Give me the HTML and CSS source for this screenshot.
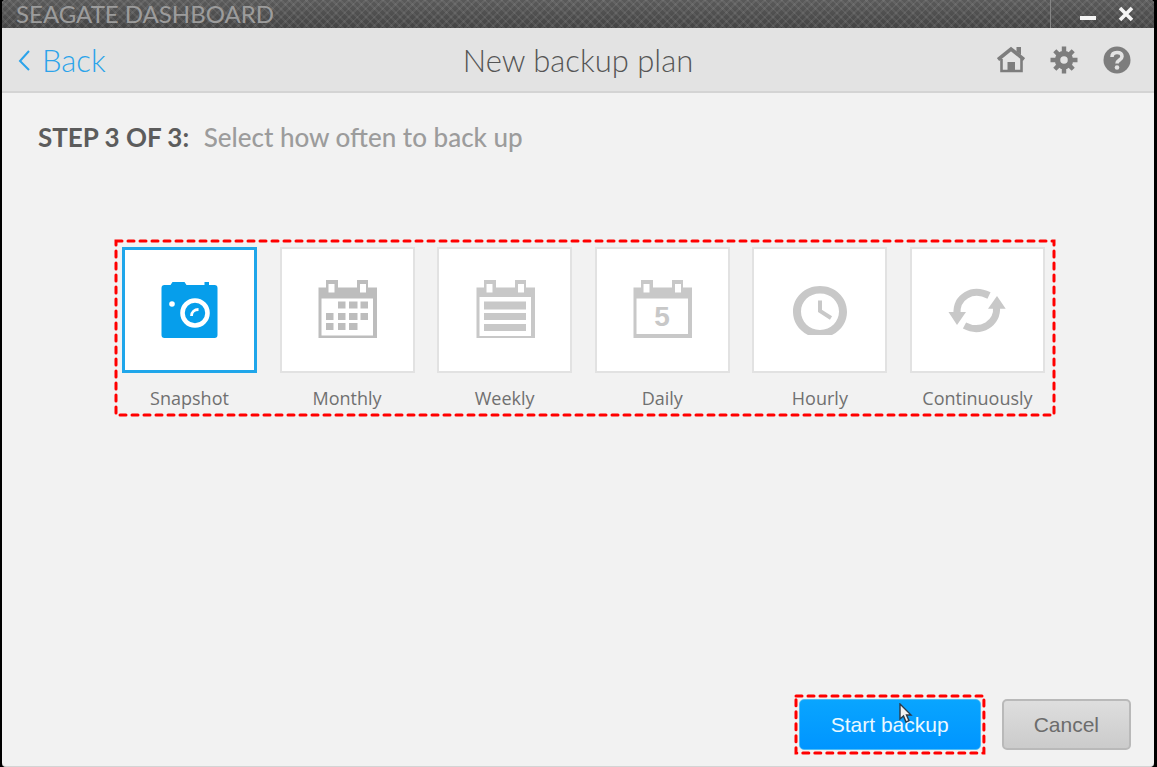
FILE: index.html
```
<!DOCTYPE html>
<html lang="en">
<head>
    <meta charset="UTF-8">
    <meta name="viewport" content="width=device-width, initial-scale=1.0">
    <title>Seagate Dashboard</title>
    <link rel="stylesheet" href="styles.css">
</head>
<body>
    <div class="window">
        <div class="titlebar">
            <span class="app-name">SEAGATE DASHBOARD</span>
            <div class="window-buttons">
                <button type="button" aria-label="Minimize">
                    <svg width="16" height="16" viewBox="0 0 16 16"><path d="M0 10h16v4H0z" fill="#f4f4f4"/></svg>
                </button>
                <button type="button" aria-label="Close">
                    <svg width="16" height="16" viewBox="0 0 16 16"><path d="M2 2l12 12M14 2L2 14" stroke="#f4f4f4" stroke-width="3.600"/></svg>
                </button>
            </div>
        </div>

        <header class="header">
            <a class="back" href="#">
                <svg width="14" height="22" viewBox="0 0 14 22"><path d="M12 2L3 12l9 9" fill="none" stroke="#2ba3ea" stroke-width="2"/></svg>
                Back
            </a>
            <h1>New backup plan</h1>
            <nav class="tools">
                <a href="#" aria-label="Home">
                    <svg width="28" height="28" viewBox="0 0 28 28">
                        <path d="M4.500 13v12h20V13" fill="none" stroke="#7d7d7d" stroke-width="2.600"/>
                        <path d="M1 13.500L14 3l13 10.500" fill="none" stroke="#7d7d7d" stroke-width="3.600"/>
                        <path d="M19.500 1H24v8l-4.500-3.500z" fill="#7d7d7d"/>
                        <path d="M10.500 16h7.500v9h-7.500z" fill="#7d7d7d"/>
                    </svg>
                </a>
                <a href="#" aria-label="Settings">
                    <svg width="28" height="28" viewBox="-14 -14 28 28">
                        <circle r="6.500" fill="none" stroke="#7d7d7d" stroke-width="5.500"/>
                        <g stroke="#7d7d7d" stroke-width="4.400">
                            <path d="M0-13.500V-8M0 13.500V8M-13.500 0H-8M13.500 0H8"/>
                            <path d="M0-13V-8M0 13V8M-13 0H-8M13 0H8" transform="rotate(45)"/>
                        </g>
                    </svg>
                </a>
                <a href="#" aria-label="Help">
                    <svg width="28" height="28" viewBox="0 0 28 28">
                        <circle cx="14" cy="14" r="13.500" fill="#7d7d7d"/>
                        <path d="M9 11C9 8 11 6.500 14 6.500s5 1.400 5 4c0 3.600-5 3.400-5 7" fill="none" stroke="#e3e3e3" stroke-width="3.600"/>
                        <circle cx="14" cy="21.500" r="2.300" fill="#e3e3e3"/>
                    </svg>
                </a>
            </nav>
        </header>

        <main class="content">
            <h2 class="step"><strong>STEP 3 OF 3:</strong> <span>Select how often to back up</span></h2>

            <div class="choices">
                <svg class="marker"><rect width="100%" height="100%"/></svg>

                <label class="choice">
                    <input type="radio" name="frequency" checked>
                    <span class="tile">
                        <svg class="icon blue" viewBox="0 0 60 60">
                            <path d="M4.500 5h6l2-3h12l2 3h18V2h4.500v3h5.500q3 0 3 3v47q0 3-3 3h-50q-3 0-3-3V8q0-3 3-3z"/>
                            <circle cx="12" cy="24" r="2.800" fill="#fff"/>
                            <circle cx="35" cy="33" r="12.500" fill="none" stroke="#fff" stroke-width="4.600"/>
                            <path d="M31.500 36c0-4 3-6.500 7-6.500" fill="none" stroke="#fff" stroke-width="2.800"/>
                        </svg>
                    </span>
                    Snapshot
                </label>

                <label class="choice">
                    <input type="radio" name="frequency">
                    <span class="tile">
                        <svg class="icon dark" viewBox="0 0 60 60">
                            <path fill-rule="evenodd" d="M1.500 7.500H9V0h12v7.500h19V0h11v7.500h9V58H1.500zM4.500 18.500v37H56v-37zM11.500 4v8.500h6V4zM43 4v8.500h6V4z"/>
                            <path d="M21 21.500h7.500v7H21zM32 21.500h8.500v7H32zM43.500 21.500h7.500v7h-7.500z"/>
                            <path d="M9 33h7.500v7H9zM21 33h7.500v7H21zM32 33h8.500v7H32zM43.500 33h7.500v7h-7.500z"/>
                            <path d="M9 43h7.500v7H9zM21 43h7.500v7H21zM32 43h8.500v7H32z"/>
                        </svg>
                    </span>
                    Monthly
                </label>

                <label class="choice">
                    <input type="radio" name="frequency">
                    <span class="tile">
                        <svg class="icon" viewBox="0 0 60 60">
                            <path fill-rule="evenodd" d="M1.500 7.500H9V0h12v7.500h19V0h11v7.500h9V58H1.500zM4.500 17v39H56V17zM11.500 4v8.500h6V4zM43 4v8.500h6V4z"/>
                            <path d="M9 21.500h42v8H9zM9 33h42v7H9zM9 44h42v7H9z"/>
                        </svg>
                    </span>
                    Weekly
                </label>

                <label class="choice">
                    <input type="radio" name="frequency">
                    <span class="tile">
                        <svg class="icon" viewBox="0 0 60 60">
                            <path fill-rule="evenodd" d="M1.500 7.500H9V0h12v7.500h19V0h11v7.500h9V58H1.500zM4.500 18.500v35.500H56v-35.500zM11.500 4v8.500h6V4zM43 4v8.500h6V4z"/>
                            <text class="day" x="30" y="46">5</text>
                        </svg>
                    </span>
                    Daily
                </label>

                <label class="choice">
                    <input type="radio" name="frequency">
                    <span class="tile">
                        <svg class="icon" viewBox="0 0 60 60">
                            <path fill-rule="evenodd" d="M18 55C8 50 3 41 3 32 3 17 15 6 30 6s27 11 27 26c0 9-5 18-15 23zM30 13.500c-11 0-19 8-19 18s8 18.500 19 18.500 19-8.500 19-18.500-8-18-19-18z"/>
                            <path d="M30 20.500V31l11 7" fill="none" stroke="#c8c8c8" stroke-width="4"/>
                        </svg>
                    </span>
                    Hourly
                </label>

                <label class="choice">
                    <input type="radio" name="frequency">
                    <span class="tile">
                        <svg class="icon" viewBox="0 0 60 60">
                            <path d="M10 34C9 17 25 7 42 15.500" fill="none" stroke="#c8c8c8" stroke-width="7"/>
                            <path d="M49.500 27C51 43 34 54 17.500 45.500" fill="none" stroke="#c8c8c8" stroke-width="7"/>
                            <path d="M1.500 32H19L10 45zM41 28.700h17.700L50 16z"/>
                        </svg>
                    </span>
                    Continuously
                </label>
            </div>
        </main>

        <footer class="actions">
            <div class="start-wrap">
                <svg class="marker"><rect width="100%" height="100%"/></svg>
                <button type="button" class="btn btn-start">Start backup</button>
                <svg class="cursor" width="14" height="20" viewBox="0 0 14 20">
                    <path d="M1 1v15l3.500-3 2.500 6 3-1.300-2.500-5.700H12z" fill="#f2f2f2" stroke="#2c3a48" stroke-width="1.400"/>
                </svg>
            </div>
            <button type="button" class="btn btn-cancel">Cancel</button>
        </footer>
    </div>
</body>
</html>
```
FILE: styles.css
```
* {
    box-sizing: border-box;
}
body {
    margin: 0;
    background-color: #000;
    font-family: Lato, sans-serif;
}
svg {
    display: block;
}
.window {
    display: flex;
    flex-direction: column;
    min-height: 100vh;
    margin: 0 3px 0 2px;
    background-color: #f2f2f2;
    border-bottom: 1px solid #d4d4d4;
    border-radius: 4px;
    overflow: hidden;
}

/* title bar */
.titlebar {
    display: flex;
    justify-content: space-between;
    height: 28px;
    padding-left: 14px;
    background:
        repeating-linear-gradient(45deg, rgba(255, 255, 255, 0.07) 0 2px, transparent 2px 6px),
        repeating-linear-gradient(-45deg, rgba(255, 255, 255, 0.07) 0 2px, transparent 2px 6px),
        linear-gradient(#5a5a5a, #444);
}
.app-name {
    font-size: 24px;
    line-height: 28px;
    color: #9c9c9c;
}
.window-buttons {
    display: flex;
    align-items: center;
    gap: 22px;
    padding: 0 20px 0 29px;
    border-left: 1px solid #858585;
}
.window-buttons button {
    padding: 0;
    border: 0;
    background: none;
}

/* header */
.header {
    display: grid;
    grid-template-columns: 1fr auto 1fr;
    align-items: center;
    height: 65px;
    padding: 0 23px;
    background-color: #e3e3e3;
    border-bottom: 2px solid #d4d4d4;
}
.back {
    display: flex;
    align-items: center;
    gap: 11px;
    margin-left: -8px;
    font-size: 31px;
    font-weight: 300;
    color: #2ba3ea;
    text-decoration: none;
}
.header h1 {
    margin: 0;
    font-size: 31px;
    font-weight: 300;
    color: #555;
}
.tools {
    display: flex;
    justify-content: flex-end;
    gap: 25px;
}

/* steps */
.content {
    flex: 1;
}
.step {
    margin: 0;
    padding: 28px 36px;
    font-size: 26px;
    line-height: 32px;
    font-weight: 500;
    color: #9c9c9c;
}
.step strong {
    margin-right: 8px;
    font-weight: 700;
    color: #5c5c5c;
}
.choices {
    position: relative;
    display: flex;
    justify-content: space-between;
    margin: 59px 99px 0 113px;
    padding: 7px 10px 6px 7px;
}
.choice {
    width: 135px;
    font-family: "Open Sans", sans-serif;
    font-size: 18px;
    line-height: 24px;
    text-align: center;
    color: #707070;
}
.choice input {
    position: absolute;
    margin: 0;
    opacity: 0;
}
.tile {
    display: flex;
    align-items: center;
    justify-content: center;
    height: 126px;
    margin-bottom: 13px;
    background-color: #fff;
    border: 2px solid #e2e2e2;
}
.choice input:checked + .tile {
    border: 3px solid #1fa6ea;
}
.icon {
    width: 60px;
    height: 60px;
    fill: #c8c8c8;
}
.icon.dark {
    fill: #bdbdbd;
}
.icon.blue {
    fill: #069eeb;
}
.day {
    font: bold 28px "Liberation Sans", sans-serif;
    text-anchor: middle;
}

/* red dashed frame */
.marker {
    position: absolute;
    inset: 1px;
    width: calc(100% - 2px);
    height: calc(100% - 2px);
    overflow: visible;
    pointer-events: none;
}
.marker rect {
    fill: none;
    stroke: #f00;
    stroke-width: 3px;
    stroke-dasharray: 6 6;
    stroke-linecap: round;
}

/* buttons */
.actions {
    display: flex;
    justify-content: flex-end;
    align-items: center;
    gap: 17px;
    padding: 0 23px 12px;
}
.start-wrap {
    position: relative;
    padding: 4px;
}
.btn {
    height: 51px;
    border-radius: 5px;
    font-family: "Liberation Sans", sans-serif;
    font-size: 21px;
}
.btn-start {
    display: block;
    padding: 0 31px;
    border: 1px solid #4fbdf5;
    background: linear-gradient(#09a5ff, #0095ff);
    color: #e9f8ff;
}
.btn-cancel {
    padding: 0 30px;
    border: 2px solid #b9b9b9;
    background: linear-gradient(#dedede, #cbcbcb);
    color: #6c6c6c;
}
.cursor {
    position: absolute;
    top: 8px;
    left: 104px;
}
```
